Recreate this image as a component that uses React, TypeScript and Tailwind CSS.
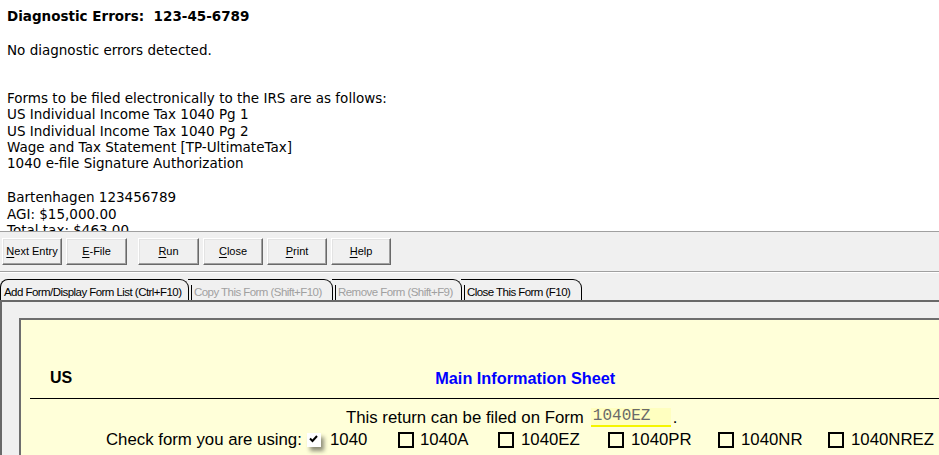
import React from "react";

const Btn = ({ u, rest, w, ml = 0 }: { u: string; rest: string; w: number; ml?: number }) => (
  <div
    className="h-[27px] flex items-center justify-center bg-[#f0f0f0] border border-t-white border-l-white border-r-[#696969] border-b-[#696969] shadow-[inset_-1px_-1px_0_#a0a0a0,inset_1px_1px_0_#e3e3e3] text-[11px] text-black"
    style={{ width: w, marginLeft: ml, fontFamily: '"Liberation Sans", Arial, sans-serif' }}
  >
    <span>
      <span className="underline underline-offset-2">{u}</span>
      {rest}
    </span>
  </div>
);

const Tab = ({ label, w, disabled, first }: { label: string; w: number; disabled?: boolean; first?: boolean }) => (
  <div
    className={
      "h-[21px] border-t border-r border-black rounded-tr-[9px] flex items-end pb-[1px] pl-[3px] text-[11.5px] leading-[13px] tracking-[-0.55px] whitespace-nowrap -mr-[1px] " +
      (first ? "rounded-tl-[8px] border-l " : "") +
      (disabled ? "text-[#a0a0a0]" : "text-black")
    }
    style={{ width: w, fontFamily: '"Liberation Sans", Arial, sans-serif' }}
  >
    {!first && <span className="w-px h-[15px] bg-black mr-[2px] self-end mb-[-1px]" />}
    {label}
  </div>
);

const Box = () => <span className="inline-block w-[16px] h-[16px] border-2 border-black bg-transparent" />;

export default function App() {
  const sans = { fontFamily: '"Liberation Sans", Arial, sans-serif' };
  return (
    <div className="w-[939px] h-[455px] overflow-hidden bg-white flex flex-col">
      {/* top report */}
      <div
        className="h-[232px] shrink-0 overflow-hidden border-b border-[#a0a0a0] pl-[7px] pt-[8px] text-[13.5px] leading-[16px] text-black"
        style={{ fontFamily: '"DejaVu Sans", Verdana, sans-serif' }}
      >
        <div className="font-bold">Diagnostic Errors:&nbsp; 123-45-6789</div>
        <div className="mt-[18px]">No diagnostic errors detected.</div>
        <div className="mt-[32px] leading-[16.3px]">
          <div>Forms to be filed electronically to the IRS are as follows:</div>
          <div>US Individual Income Tax 1040 Pg 1</div>
          <div>US Individual Income Tax 1040 Pg 2</div>
          <div>Wage and Tax Statement [TP-UltimateTax]</div>
          <div>1040 e-file Signature Authorization</div>
        </div>
        <div className="mt-[18px] leading-[16.3px]">
          <div>Bartenhagen 123456789</div>
          <div>AGI: $15,000.00</div>
          <div>Total tax: $463.00</div>
        </div>
      </div>

      {/* toolbar */}
      <div className="h-[40px] shrink-0 bg-[#f0f0f0] border-b border-[#a0a0a0] flex items-start pt-[6px] pl-[2px]">
        <Btn u="N" rest="ext Entry" w={60} />
        <Btn u="E" rest="-File" w={61} ml={4} />
        <Btn u="R" rest="un" w={61} ml={11} />
        <Btn u="C" rest="lose" w={60} ml={4} />
        <Btn u="P" rest="rint" w={60} ml={4} />
        <Btn u="H" rest="elp" w={60} ml={4} />
      </div>
      <div className="h-px bg-white shrink-0" />

      {/* tabs */}
      <div className="h-[29px] shrink-0 bg-[#f0f0f0] flex items-end border-b-2 border-[#696969]">
        <Tab label="Add Form/Display Form List (Ctrl+F10)" w={189} first />
        <Tab label="Copy This Form (Shift+F10)" w={145} disabled />
        <Tab label="Remove Form (Shift+F9)" w={130} disabled />
        <Tab label="Close This Form (F10)" w={121} />
      </div>

      {/* form area */}
      <div className="flex-1 bg-[#f0f0f0] border-l-2 border-[#696969] pl-[17px] pt-[16px] overflow-hidden">
        <div className="h-full bg-[#ffffd9] border-t-2 border-l-2 border-[#6e6e6e] text-black" style={sans}>
          <div className="flex items-center pt-[49px] h-[67px] text-[16px] leading-[18px] font-bold">
            <span className="ml-[29px]">US</span>
            <span className="ml-[363px] text-[16.3px] text-[#0000ff]">Main Information Sheet</span>
          </div>
          <div className="ml-[9px] mt-[11px] h-px bg-black" />
          <div className="mt-[9px] ml-[325px] flex items-center text-[16.8px] leading-[18px]">
            <span>This return can be filed on Form</span>
            <span
              className="ml-[7px] w-[80px] h-[19px] bg-[#ffffc0] border-b-2 border-[#f5f500] pl-[2px] text-[16px] leading-[17px] text-[#6a6a6a]"
              style={{ fontFamily: '"Liberation Mono", "Courier New", monospace' }}
            >
              1040EZ
            </span>
            <span className="ml-[2px]">.</span>
          </div>
          <div className="mt-[4px] ml-[85px] flex items-center text-[16.8px] leading-[18px]">
            <span className="w-[201px]">Check form you are using:</span>
            <span className="w-[91px] flex items-center">
              <span className="relative w-[14px] h-[14px] bg-white shadow-[3px_4px_4px_rgba(0,0,0,0.45)] flex items-start justify-start pl-[2px] pt-[2px]">
                <svg width="9" height="8" viewBox="0 0 9 8">
                  <path d="M1 3.5 L3.5 6 L8 1" stroke="black" strokeWidth="2" fill="none" />
                </svg>
              </span>
              <span className="ml-[9px]">1040</span>
            </span>
            <span className="w-[100px] flex items-center">
              <Box />
              <span className="ml-[6px]">1040A</span>
            </span>
            <span className="w-[110px] flex items-center">
              <Box />
              <span className="ml-[7px]">1040EZ</span>
            </span>
            <span className="w-[110px] flex items-center">
              <Box />
              <span className="ml-[7px]">1040PR</span>
            </span>
            <span className="w-[110px] flex items-center">
              <Box />
              <span className="ml-[7px]">1040NR</span>
            </span>
            <span className="flex items-center">
              <Box />
              <span className="ml-[7px]">1040NREZ</span>
            </span>
          </div>
        </div>
      </div>
    </div>
  );
}
